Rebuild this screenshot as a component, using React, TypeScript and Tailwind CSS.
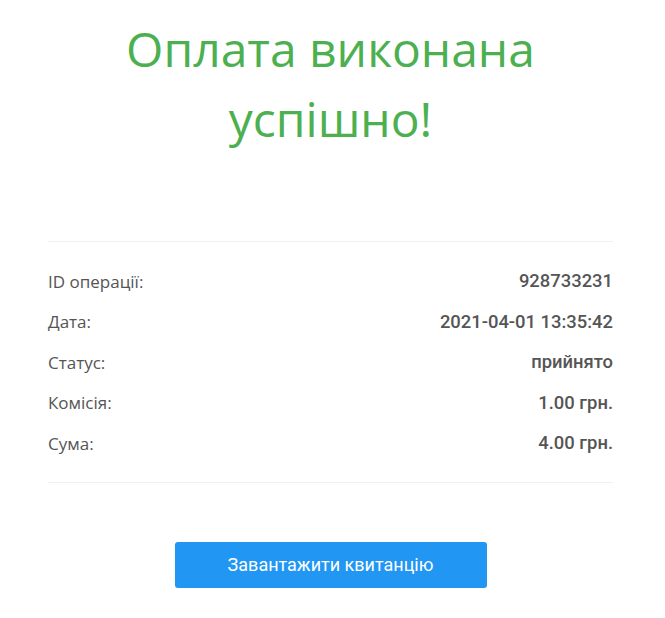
const rows = [
  { label: 'ID операції:', value: '928733231' },
  { label: 'Дата:', value: '2021-04-01 13:35:42' },
  { label: 'Статус:', value: 'прийнято' },
  { label: 'Комісія:', value: '1.00 грн.' },
  { label: 'Сума:', value: '4.00 грн.' },
]

export default function App() {
  return (
    <div className="min-h-[618px] bg-white pl-12 pr-[52px]">
      {/* заголовок */}
      <h1 className="pt-[14px] text-center text-[48px] leading-[70px] text-[#4caf50] font-['Open_Sans',sans-serif]">
        Оплата виконана
        <br />
        успішно!
      </h1>

      <div className="mt-[87px] border-y border-[#f0f0f0] pt-[19px] pb-[18px]">
        {rows.map(r => (
          <div key={r.label} className="flex items-center justify-between h-[40.5px]">
            <span className="text-[17px] text-[#555] font-['Open_Sans',sans-serif]">{r.label}</span>
            <span className="text-[18.4px] font-medium text-[#555] font-['Roboto',sans-serif]">{r.value}</span>
          </div>
        ))}
      </div>

      <div className="flex justify-center pt-[59px]">
        <button className="w-[312px] h-[46px] rounded-[3px] bg-[#2196f3] text-white text-[18px] font-['Roboto',sans-serif]">
          Завантажити квитанцію
        </button>
      </div>
    </div>
  )
}
